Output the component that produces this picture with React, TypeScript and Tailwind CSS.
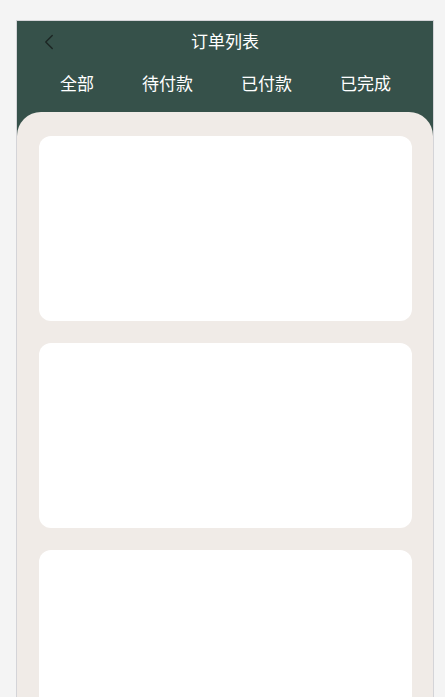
import { ChevronLeft } from "lucide-react";

const tabs = ["全部", "待付款", "已付款", "已完成"];

export default function App() {
  return (
    <div
      className="min-h-screen bg-[#f4f4f4] pt-5 pl-4 pr-[11px] overflow-hidden"
      style={{ fontFamily: '"Noto Sans CJK SC", "Noto Sans", sans-serif' }}
    >
      <div className="w-[418px] h-[677px] border-l border-t border-r border-[#d4d4d8] bg-[#36514a] flex flex-col overflow-hidden">
        {/* Header */}
        <div className="relative shrink-0 h-[41px] flex items-center justify-center pb-[3px]">
          <ChevronLeft size={26} strokeWidth={1.3} className="absolute left-[19px] top-[8px] text-[#1c2623]" />
          <span className="text-white text-[17px] leading-none">订单列表</span>
        </div>

        {/* Tabs */}
        <div className="shrink-0 flex justify-between pl-[43px] pr-[42px] h-[44px] items-center pb-[4px]">
          {tabs.map((t) => (
            <span key={t} className="text-white text-[17px] leading-none">
              {t}
            </span>
          ))}
        </div>

        {/* Content */}
        <div className="mt-[6px] flex-1 bg-[#f0ebe7] rounded-t-[24px] pl-[22px] pr-[21px] pt-[24px] flex flex-col gap-[22px]">
          {[0, 1, 2].map((i) => (
            <div key={i} className="h-[185px] shrink-0 bg-white rounded-[12px]" />
          ))}
        </div>
      </div>
    </div>
  );
}
